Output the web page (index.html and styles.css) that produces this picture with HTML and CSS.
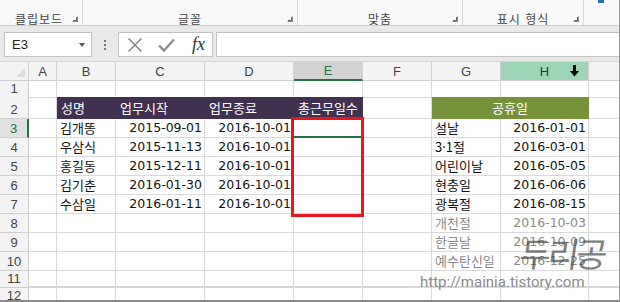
FILE: index.html
```html
<!DOCTYPE html>
<html lang="ko">
<head>
    <meta charset="UTF-8">
    <title>공휴일 - Excel</title>
    <link rel="stylesheet" href="styles.css">
</head>
<body>
<div class="window">
    <div class="ribbon">
        <div class="group g-clip">클립보드<span class="launcher"></span></div>
        <div class="group g-font">글꼴<span class="launcher"></span></div>
        <div class="group g-align">맞춤<span class="launcher"></span></div>
        <div class="group g-num">표시 형식<span class="launcher"></span></div>
        <div class="group g-more"><span class="blue-mark"></span></div>
    </div>

    <div class="formula-bar">
        <div class="name-box">E3<span class="caret"></span></div>
        <div class="dots"><i></i><i></i><i></i></div>
        <div class="fx-buttons">
            <svg class="fb-icon" width="16" height="14" viewBox="0 0 16 14">
                <path d="M1.5 0.5 L14.5 13.5 M14.5 0.5 L1.5 13.5" stroke="#8c8c8c" stroke-width="1.6" fill="none"/>
            </svg>
            <svg class="fb-icon" width="17" height="14" viewBox="0 0 17 14">
                <path d="M1 7.5 L6 12.5 L16 1.5" stroke="#8c8c8c" stroke-width="2.4" fill="none"/>
            </svg>
            <span class="fx">fx</span>
        </div>
        <div class="formula-input"></div>
    </div>

    <div class="sheet" id="sheet">
        <div class="selection"></div>
        <div class="signature">두리공</div>
        <div class="url-mark">http://mainia.tistory.com</div>
    </div>

    <div class="frame"></div>
</div>

<script>
    // Column letters (I is cut off by the window edge)
    const letters = ["A", "B", "C", "D", "E", "F", "G", "H", "I"];

    // Row heights in px, header first
    const heights = [19, 16, 22, 19, 19, 19, 19, 19, 19, 19, 19, 17, 14];

    // Cell values by row
    const data = {
        2: { B: "성명", C: "업무시작", D: "업무종료", E: "총근무일수", G: "공휴일" },
        3: { B: "김개똥", C: "2015-09-01", D: "2016-10-01", G: "설날", H: "2016-01-01" },
        4: { B: "우삼식", C: "2015-11-13", D: "2016-10-01", G: "3·1절", H: "2016-03-01" },
        5: { B: "홍길동", C: "2015-12-11", D: "2016-10-01", G: "어린이날", H: "2016-05-05" },
        6: { B: "김기춘", C: "2016-01-30", D: "2016-10-01", G: "현충일", H: "2016-06-06" },
        7: { B: "수삼일", C: "2016-01-11", D: "2016-10-01", G: "광복절", H: "2016-08-15" },
        8: { G: "개천절", H: "2016-10-03" },
        9: { G: "한글날", H: "2016-10-09" },
        10: { G: "예수탄신일", H: "2016-12-25" }
    };

    const sheet = document.getElementById("sheet");

    function addCell(parent, cls, text) {
        const cell = document.createElement("div");
        cell.className = cls;
        if (text) cell.textContent = text;
        parent.appendChild(cell);
        return cell;
    }

    function addRow(r) {
        const row = document.createElement("div");
        row.className = "row";
        row.style.height = heights[r] + "px";
        sheet.appendChild(row);
        return row;
    }

    // Header row
    const headRow = addRow(0);
    addCell(headRow, "corner", "");
    letters.forEach(l => {
        let cls = "col-head";
        if (l === "E") cls += " col-active";
        if (l === "H") cls += " col-hover";
        const head = addCell(headRow, cls, l === "I" ? "" : l);
        if (l === "H") {
            head.insertAdjacentHTML("beforeend",
                '<svg class="cursor" width="9" height="12" viewBox="0 0 9 12"><rect x="3" y="0" width="3" height="7" fill="#000"/><path d="M0 6 L9 6 L4.5 11.5 Z" fill="#000"/></svg>');
        }
    });

    // Body rows
    for (let r = 1; r <= 12; r++) {
        const rowEl = addRow(r);
        let headCls = "row-head";
        if (r === 3) headCls += " row-active";
        if (r === 12) headCls += " row-last";
        addCell(rowEl, headCls, String(r));
        const values = data[r] || {};
        letters.forEach(l => {
            if (r === 2 && l === "H") return;
            const value = values[l] || "";
            let cls = "cell";
            if (/^\d{4}-/.test(value)) cls += " num";
            if (r === 2 && ["B", "C", "D", "E"].includes(l)) cls += " title";
            if (r === 2 && l === "G") cls += " holiday merged";
            if (r >= 8 && r <= 10 && (l === "G" || l === "H")) cls += " faded";
            if (r === 3 && l === "E") cls += " active";
            if (r === 11) cls += " thick";
            addCell(rowEl, cls, value);
        });
    }
</script>
</body>
</html>
```

FILE: styles.css
```css
* {
    box-sizing: border-box;
}
body {
    margin: 0;
    font-family: "Noto Sans CJK KR", "Liberation Sans", sans-serif;
    background: #fff;
}
.window {
    position: relative;
    width: 620px;
    height: 302px;
    overflow: hidden;
}
.frame {
    position: absolute;
    inset: 0;
    border-right: 1px solid #9a9a9a;
    border-bottom: 2px solid #8a8a8a;
    pointer-events: none;
}

/* ribbon */
.ribbon {
    display: flex;
    height: 26px;
    background: #f9f9f9;
    border-bottom: 1px solid #d0d0d0;
}
.group {
    position: relative;
    display: flex;
    justify-content: center;
    align-items: flex-end;
    border-right: 1px solid #d6d6d6;
    font-size: 12px;
    line-height: 13px;
    letter-spacing: 1px;
    color: #444;
}
.g-clip { width: 83px; padding-right: 4px; }
.g-font { width: 215px; }
.g-align { width: 165px; }
.g-num { width: 121px; }
.g-more { flex: 1; border-right: none; }
.launcher {
    position: absolute;
    right: 4px;
    bottom: 3px;
    width: 6px;
    height: 6px;
    border: 1px solid #8a8a8a;
    border-top-color: transparent;
    border-left-color: transparent;
}
.launcher::after {
    content: "";
    position: absolute;
    left: 0;
    top: 0;
    width: 3px;
    height: 3px;
    border-right: 1px solid #666;
    border-bottom: 1px solid #666;
}
.blue-mark {
    position: absolute;
    left: 14px;
    top: 0;
    width: 6px;
    height: 3px;
    background: #2b6cc4;
}

/* formula bar */
.formula-bar {
    display: flex;
    align-items: flex-start;
    height: 35px;
    padding-top: 6px;
    background: #e9e9e9;
}
.name-box {
    position: relative;
    width: 88px;
    height: 25px;
    margin-left: 4px;
    padding-left: 7px;
    background: #fff;
    border: 1px solid #c3c3c3;
    font-family: "Liberation Sans", sans-serif;
    font-size: 13px;
    line-height: 23px;
    color: #222;
}
.caret {
    position: absolute;
    right: 6px;
    top: 10px;
    border-left: 3px solid transparent;
    border-right: 3px solid transparent;
    border-top: 4px solid #555;
}
.dots {
    display: flex;
    flex-direction: column;
    gap: 2px;
    width: 26px;
    padding-top: 8px;
    align-items: center;
}
.dots i {
    width: 2px;
    height: 2px;
    background: #777;
}
.fx-buttons {
    display: flex;
    align-items: center;
    gap: 15px;
    width: 95px;
    height: 25px;
    padding-left: 8px;
    background: #fff;
    border: 1px solid #c3c3c3;
}
.fx {
    font-family: "Liberation Serif", serif;
    font-style: italic;
    font-size: 18px;
    color: #333;
    margin-left: 2px;
}
.formula-input {
    flex: 1;
    height: 25px;
    margin-left: 3px;
    background: #fff;
    border: 1px solid #c3c3c3;
    border-right: none;
}

/* sheet */
.sheet {
    position: relative;
    display: flex;
    flex-direction: column;
    border-top: 1px solid #d4d4d4;
}
.row {
    display: grid;
    grid-template-columns: 29px 28px 59px 89px 89px 69px 69px 69px 88px 40px;
    flex-shrink: 0;
}
.corner,
.col-head,
.row-head {
    background: #f3f3f3;
    border-right: 1px solid #cfcfcf;
    border-bottom: 1px solid #cfcfcf;
    font-family: "Liberation Sans", sans-serif;
    color: #444;
    display: flex;
    justify-content: center;
}
.corner {
    position: relative;
}
.corner::after {
    content: "";
    position: absolute;
    right: 3px;
    bottom: 3px;
    border-left: 9px solid transparent;
    border-bottom: 9px solid #dcdcdc;
}
.col-head {
    position: relative;
    align-items: center;
    font-size: 13px;
}
.col-active {
    background: #d2d2d2;
    color: #217346;
    border-bottom: 2px solid #217346;
}
.col-hover {
    background: #9fd5b7;
    color: #333;
}
.cursor {
    position: absolute;
    right: 9px;
    top: 3px;
}
.row-head {
    align-items: flex-end;
    font-size: 13px;
    line-height: 16px;
}
.row-head.row-last {
    align-items: flex-start;
    padding-top: 1px;
    border-bottom: none;
    line-height: 13px;
}
.row-active {
    background: #e1e1e1;
    color: #217346;
    border-right: 2px solid #217346;
}
.cell {
    display: flex;
    align-items: flex-end;
    padding: 0 3px 1px;
    border-right: 1px solid #dadada;
    border-bottom: 1px solid #dadada;
    font-size: 13px;
    line-height: 16px;
    color: #111;
    white-space: nowrap;
    overflow: hidden;
}
.cell.num {
    justify-content: flex-end;
    padding-right: 2px;
    font-family: "DejaVu Sans", sans-serif;
    font-size: 12.5px;
}
.cell.thick {
    border-bottom: 2px solid #d8d8d8;
}
.title {
    background: #403151;
    color: #fff;
    border-color: #403151;
    padding-left: 4px;
    padding-bottom: 2px;
}
.holiday {
    background: #76933c;
    color: #fff;
    border-color: #76933c;
    justify-content: center;
    padding-bottom: 2px;
}
.merged {
    grid-column: span 2;
}
.faded {
    color: #8a8a8a;
}
.active {
    border-bottom: 2px solid #217346;
}

/* overlays */
.selection {
    position: absolute;
    left: 291px;
    top: 55px;
    width: 73px;
    height: 100px;
    border: 3px solid #e8171f;
    z-index: 1;
}
.url-mark {
    position: absolute;
    left: 420px;
    top: 211px;
    font-family: "Roboto", sans-serif;
    font-size: 15px;
    color: #8b8b8b;
    z-index: 1;
}
.signature {
    position: absolute;
    left: 520px;
    top: 170px;
    font-size: 34px;
    line-height: 42px;
    color: rgba(70, 70, 70, 0.7);
    transform: skewX(-8deg);
    letter-spacing: -3px;
    z-index: 1;
}
```
